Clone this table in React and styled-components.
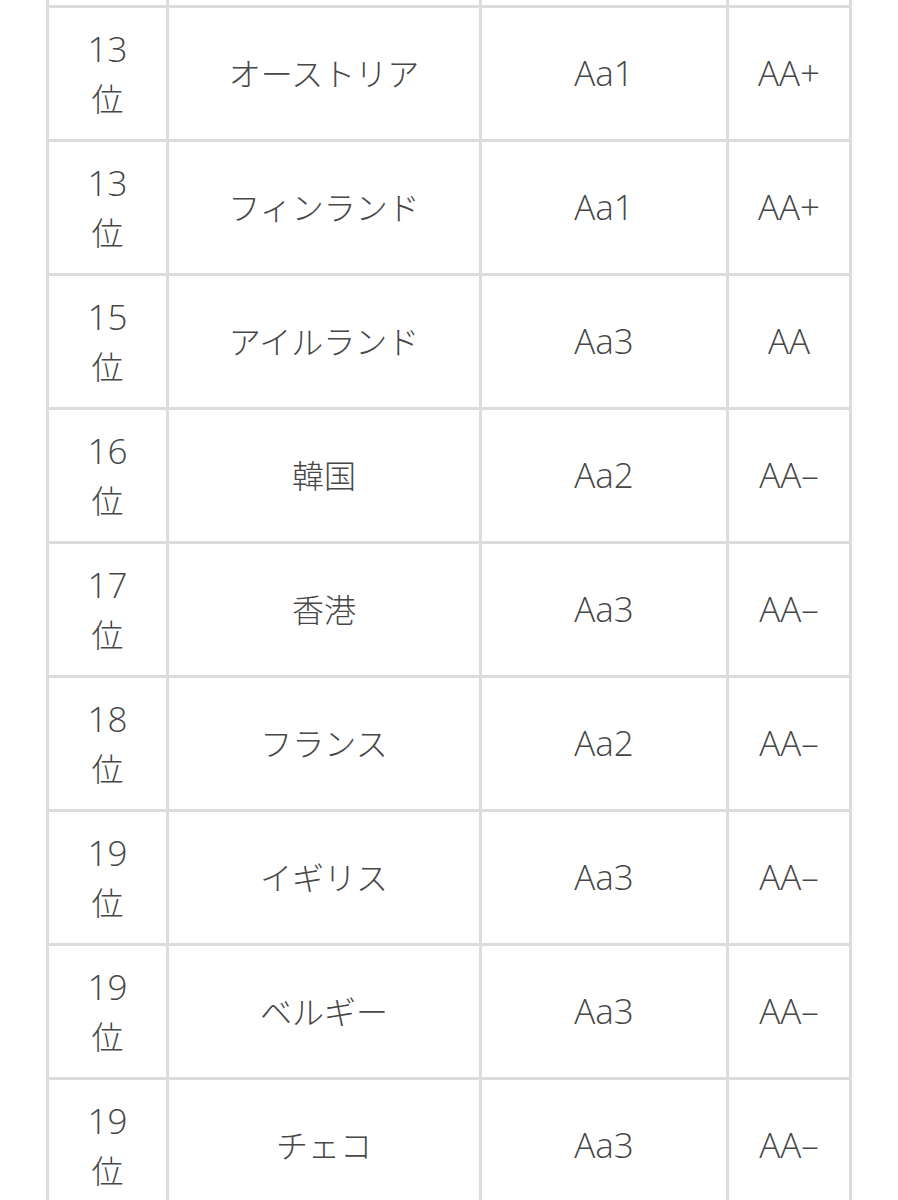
import React from "react";
import styled, { createGlobalStyle } from "styled-components";

const GlobalStyle = createGlobalStyle`
  html, body {
    margin: 0;
    padding: 0;
    background: #fff;
  }
  body {
    font-family: "Noto Sans CJK JP", "Noto Sans", sans-serif;
    color: #474747;
  }
`;

const rows = [
  { rank: "13", country: "オーストリア", moodys: "Aa1", sp: "AA+" },
  { rank: "13", country: "フィンランド", moodys: "Aa1", sp: "AA+" },
  { rank: "15", country: "アイルランド", moodys: "Aa3", sp: "AA" },
  { rank: "16", country: "韓国", moodys: "Aa2", sp: "AA–" },
  { rank: "17", country: "香港", moodys: "Aa3", sp: "AA–" },
  { rank: "18", country: "フランス", moodys: "Aa2", sp: "AA–" },
  { rank: "19", country: "イギリス", moodys: "Aa3", sp: "AA–" },
  { rank: "19", country: "ベルギー", moodys: "Aa3", sp: "AA–" },
  { rank: "19", country: "チェコ", moodys: "Aa3", sp: "AA–" },
];

const Table = styled.div`
  margin-left: 46px;
  width: 806px;
  box-sizing: border-box;
  padding: 0 3px;
  background: #dcdcdc;
  display: grid;
  grid-template-columns: 117px 310px 244px 120px;
  grid-template-rows: 5px;
  grid-auto-rows: 131px;
  row-gap: 3px;
  column-gap: 3px;
`;

const Stub = styled.div`
  background: #fff;
`;

const Cell = styled.div`
  background: #fff;
  display: flex;
  flex-direction: column;
  align-items: center;
  justify-content: center;
  text-align: center;
  font-family: ${(p) =>
    p.$latin
      ? `"Open Sans", "Noto Sans CJK JP", sans-serif`
      : `"Noto Sans CJK JP", sans-serif`};
  font-size: ${(p) => (p.$latin ? "35px" : "32px")};
  line-height: 49px;
  font-weight: 300;
  padding-bottom: 2px;
  box-sizing: border-box;
`;

const RankNum = styled.span`
  display: block;
  font-family: "Open Sans", "Noto Sans CJK JP", sans-serif;
  font-size: 35px;
  font-weight: 300;
`;

const RankUnit = styled.span`
  display: block;
`;

export default function App() {
  return (
    <>
      <GlobalStyle />
      <Table>
        <Stub />
        <Stub />
        <Stub />
        <Stub />
        {rows.map((r, i) => (
          <React.Fragment key={i}>
            <Cell>
              <RankNum>{r.rank}</RankNum>
              <RankUnit>位</RankUnit>
            </Cell>
            <Cell>{r.country}</Cell>
            <Cell $latin>{r.moodys}</Cell>
            <Cell $latin>{r.sp}</Cell>
          </React.Fragment>
        ))}
      </Table>
    </>
  );
}
